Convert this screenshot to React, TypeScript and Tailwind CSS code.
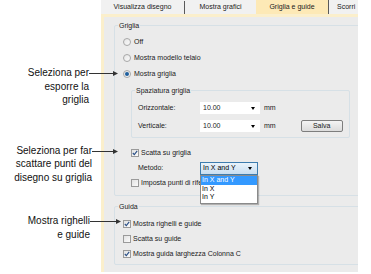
import type { ReactNode } from "react";

const ui = "font-['Liberation_Sans',Arial,sans-serif]";

function Arrow({ width }: { width: number }) {
  return (
    <svg width={width} height="7" viewBox={`0 0 ${width} 7`} className="shrink-0 overflow-visible">
      <line x1="0" y1="3.5" x2={width - 3} y2="3.5" stroke="#333" strokeWidth="1" />
      <path d={`M${width - 5} 1 L${width} 3.5 L${width - 5} 6 Z`} fill="#333" />
    </svg>
  );
}

function Note({ lines, arrow, className }: { lines: string[]; arrow: number; className: string }) {
  return (
    <div className={`flex items-start ${className}`}>
      <div className="w-[88px] shrink-0 text-right text-[10px] leading-[13.5px] text-[#111]">
        {lines.map((l) => (
          <div key={l}>{l}</div>
        ))}
      </div>
      <div className="mt-[4px]">
        <Arrow width={arrow} />
      </div>
    </div>
  );
}

function Radio({ checked, label }: { checked?: boolean; label: string }) {
  return (
    <div className="flex items-center h-[10px]">
      <span className="w-[8px] h-[8px] rounded-full border border-[#a7a7a7] bg-gradient-to-br from-[#e6e6e6] to-[#fafafa] flex items-center justify-center">
        {checked && <span className="w-[4px] h-[4px] rounded-full bg-[#1f5f9e]" />}
      </span>
      <span className="ml-[3px]">{label}</span>
    </div>
  );
}

function Check({ checked, label, clip }: { checked?: boolean; label: string; clip?: boolean }) {
  return (
    <div className="flex items-center h-[10px]">
      <span className="shrink-0 w-[8px] h-[8px] border border-[#9a9a9a] bg-gradient-to-br from-[#e2e2e2] to-[#fbfbfb] flex items-center justify-center">
        {checked && (
          <svg width="6" height="6" viewBox="0 0 6 6">
            <path d="M0.8 3 L2.3 4.6 L5.2 0.8" stroke="#2a4f86" strokeWidth="1.1" fill="none" />
          </svg>
        )}
      </span>
      <span className={`ml-[2px] whitespace-nowrap ${clip ? "w-[59px] overflow-hidden" : ""}`}>{label}</span>
    </div>
  );
}

function Group({ title, className, children }: { title: string; className: string; children: ReactNode }) {
  return (
    <div className={`relative border border-[#d6e0e6] rounded-[2px] ${className}`}>
      <div className="absolute -top-[5px] left-[3px] px-[1px] bg-[#ebebeb] leading-[9px]">{title}</div>
      {children}
    </div>
  );
}

function Input({ value }: { value: string }) {
  return (
    <div className="w-[60px] h-[12px] bg-white flex items-center pl-[3px] pr-[5px] justify-between">
      <span>{value}</span>
      <span className="w-0 h-0 border-l-[2.5px] border-r-[2.5px] border-t-[3px] border-l-transparent border-r-transparent border-t-black" />
    </div>
  );
}

export default function App() {
  return (
    <div className={`w-[371px] h-[274px] bg-white flex overflow-hidden ${ui}`}>
      <div className="relative z-10 w-[101px] shrink-0 flex flex-col">
        <Note className="mt-[66px] ml-[1px]" lines={["Seleziona per", "esporre la", "griglia"]} arrow={29} />
        <Note className="mt-[37px] ml-[4px]" lines={["Seleziona per far", "scattare punti del", "disegno su griglia"]} arrow={26} />
        <Note className="mt-[30px] ml-[2px]" lines={["Mostra righelli", "e guide"]} arrow={31} />
      </div>

      <div className="w-[257px] h-[272px] flex flex-col text-[7px] text-[#1a1a1a] overflow-hidden">
        <div className="h-[14px] flex items-stretch bg-[#f1f1f1] text-[7px]">
          <div className="w-[84px] flex items-center justify-center border-r border-[#5a5a5a] mt-[1px]">Visualizza disegno</div>
          <div className="w-[71px] flex items-center justify-center">Mostra grafici</div>
          <div className="w-[73px] flex items-center justify-center bg-[#fde9b6] border-r border-[#5a5a5a]">Griglia e guide</div>
          <div className="flex-1 flex items-center pl-[8px] whitespace-nowrap">Scorri</div>
        </div>

        <div className="flex-1 border-l-[3px] border-t-[3px] border-[#fbefcc] bg-[#ebebeb] pl-[10px] pt-[8px]">
          <Group title="Griglia" className="-mr-[12px] h-[171px] pl-[8px] pt-[11px]">
            <div className="flex flex-col gap-[6px]">
              <Radio label="Off" />
              <Radio label="Mostra modello telaio" />
              <Radio checked label="Mostra griglia" />
            </div>
            <Group title="Spaziatura griglia" className="ml-[8px] mt-[11px] w-[219px] h-[48px] pl-[6px] pt-[11px]">
              <div className="flex items-center h-[12px]">
                <span className="w-[62px]">Orizzontale:</span>
                <Input value="10.00" />
                <span className="ml-[4px]">mm</span>
              </div>
              <div className="flex items-center h-[12px] mt-[6px]">
                <span className="w-[62px]">Verticale:</span>
                <Input value="10.00" />
                <span className="ml-[4px]">mm</span>
                <div className="ml-[25px] w-[42px] h-[12px] rounded-[2px] border border-[#7d7d7d] bg-gradient-to-b from-[#f4f4f4] to-[#dcdcdc] flex items-center justify-center">
                  Salva
                </div>
              </div>
            </Group>
            <div className="ml-[8px] mt-[10px]">
              <Check checked label="Scatta su griglia" />
              <div className="flex items-center mt-[4px] h-[13px] relative z-10">
                <span className="w-[62px] ml-[7px]">Metodo:</span>
                <div className="relative">
                  <div className="w-[58px] h-[13px] border border-[#3d7cae] bg-gradient-to-b from-[#e9f3fb] to-[#c9def0] flex items-center justify-between pl-[2px] pr-[5px] text-black">
                    <span>In X and Y</span>
                    <span className="w-0 h-0 border-l-[2.5px] border-r-[2.5px] border-t-[3px] border-l-transparent border-r-transparent border-t-black" />
                  </div>
                  <div className="absolute left-0 top-[13px] w-[58px] bg-white border border-[#8a8a8a] shadow-[1px_1px_1px_rgba(0,0,0,0.25)] leading-[8.5px] pb-[1px] text-black">
                    <div className="bg-[#3399ff] text-white pl-[1px]">In X and Y</div>
                    <div className="pl-[1px]">In X</div>
                    <div className="pl-[1px]">In Y</div>
                  </div>
                </div>
              </div>
              <div className="mt-[3px]">
                <Check clip label="Imposta punti di riferimento" />
              </div>
            </div>
          </Group>

          <Group title="Guida" className="-mr-[12px] mt-[10px] h-[59px] pl-[8px] pt-[12px]">
            <div className="flex flex-col gap-[5px]">
              <Check checked label="Mostra righelli e guide" />
              <Check label="Scatta su guide" />
              <Check checked label="Mostra guida larghezza Colonna C" />
            </div>
          </Group>
        </div>
      </div>
    </div>
  );
}
